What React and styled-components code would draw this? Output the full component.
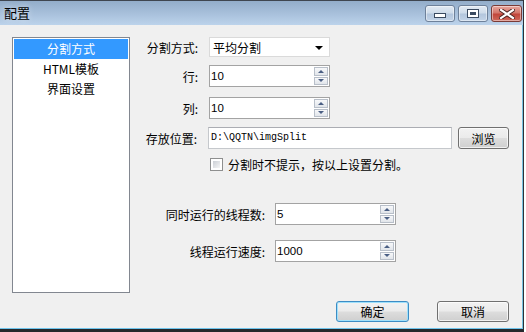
import React from "react";
import styled, { createGlobalStyle } from "styled-components";

const GlobalStyle = createGlobalStyle`
  html, body { margin: 0; padding: 0; background: #ffffff; }
  body { font-family: "Noto Sans CJK SC", "Liberation Sans", sans-serif; font-size: 12px; color: #000; }
  * { box-sizing: border-box; }
`;

const Window = styled.div`
  width: 524px;
  height: 332px;
  display: flex;
  flex-direction: column;
  border-right: 1px solid #2e3136;
  border-bottom: 3px solid #25282c;
  background: #f0f0f0;
`;

const TitleBar = styled.div`
  height: 25px;
  flex: none;
  display: flex;
  align-items: flex-start;
  border-top: 1px solid #3f4650;
  background: linear-gradient(#93adca, #a9c1dc 55%, #bcd3eb);
  padding-left: 4px;
`;

const Title = styled.div`
  font-size: 13px;
  line-height: 13px;
  margin-top: 5px;
  color: #000;
  text-shadow: 0 0 6px rgba(255, 255, 255, 0.6);
  flex: 1;
`;

const Controls = styled.div`
  display: flex;
  gap: 3px;
  margin-top: 4px;
  margin-right: 1px;
`;

const CtlBtn = styled.div`
  width: ${(p) => p.$w}px;
  height: 17px;
  border: 1px solid ${(p) => (p.$close ? "#7a3b36" : "#6e819a")};
  border-radius: 3px;
  background: ${(p) =>
    p.$close
      ? "linear-gradient(#e8a79e, #d4776c 45%, #c2463b 55%, #cf6a5c)"
      : "linear-gradient(#e2eaf3, #cfdcea 45%, #b3c6dd 55%, #c3d4e8)"};
  box-shadow: inset 0 0 0 1px rgba(255, 255, 255, 0.45);
  display: flex;
  align-items: ${(p) => p.$align || "center"};
  justify-content: center;
  padding-bottom: ${(p) => (p.$align === "flex-end" ? 3 : 0)}px;
`;

const Client = styled.div`
  flex: 1;
  display: flex;
  flex-direction: column;
  padding: 12px 13px 0 12px;
  border-right: 1px solid #78c0e0;
  border-bottom: 1px solid #6ec4ec;
`;

const Main = styled.div`
  display: flex;
  height: 256px;
  gap: 15px;
`;

const ListBox = styled.div`
  width: 120px;
  height: 256px;
  border: 1px solid #828790;
  background: #fff;
  padding: 1px;
  display: flex;
  flex-direction: column;
`;

const ListItem = styled.div`
  height: 20px;
  line-height: 20px;
  text-align: center;
  background: ${(p) => (p.$selected ? "#3399ff" : "transparent")};
  color: ${(p) => (p.$selected ? "#fff" : "#000")};
`;

const Form = styled.div`
  display: flex;
  flex-direction: column;
`;

const Row = styled.div`
  display: flex;
  align-items: center;
  height: ${(p) => p.$h || 22}px;
  margin-top: ${(p) => p.$mt || 0}px;
  margin-left: ${(p) => p.$ml || 0}px;
`;

const Label = styled.div`
  width: ${(p) => p.$w}px;
  text-align: right;
  margin-right: ${(p) => p.$gap || 11}px;
  white-space: nowrap;
`;

const Combo = styled.div`
  width: 121px;
  height: 20px;
  border: 1px solid #dadada;
  background: #fff;
  display: flex;
  align-items: center;
  padding: 0 6px 0 3px;
  justify-content: space-between;
`;

const Caret = styled.div`
  width: 0;
  height: 0;
  border-left: 4px solid transparent;
  border-right: 4px solid transparent;
  border-top: 4px solid #000;
  margin-top: 2px;
`;

const Spin = styled.div`
  width: 121px;
  height: 22px;
  border: 1px solid #a3a3a3;
  background: #fff;
  display: flex;
  align-items: stretch;
  padding: 1px 1px 1px 0;
`;

const SpinText = styled.div`
  flex: 1;
  font-family: "Liberation Sans", "DejaVu Sans", sans-serif;
  font-size: 11.5px;
  line-height: 18px;
  padding-left: 1px;
`;

const SpinBtns = styled.div`
  width: 14px;
  display: flex;
  flex-direction: column;
  gap: 1px;
`;

const SpinBtn = styled.div`
  flex: 1;
  border: 1px solid #b8bfc9;
  background: linear-gradient(#f7f8fa, #e1e5ea);
  display: flex;
  align-items: center;
  justify-content: center;
`;

const Tri = styled.div`
  width: 0;
  height: 0;
  border-left: 3px solid transparent;
  border-right: 3px solid transparent;
  ${(p) => (p.$down ? "border-top: 3px solid #4a5f84;" : "border-bottom: 3px solid #4a5f84;")}
`;

const TextBox = styled.div`
  width: 244px;
  height: 22px;
  border: 1px solid #c5c8cc;
  border-top-color: #abadb3;
  background: #fff;
  font-family: "Liberation Mono", monospace;
  font-size: 10px;
  line-height: 20px;
  padding-left: 2px;
  margin-right: 6px;
`;

const Button = styled.div`
  width: ${(p) => p.$w}px;
  height: ${(p) => p.$h || 21}px;
  border: 1px solid ${(p) => (p.$default ? "#3c8cc4" : "#707070")};
  border-radius: 3px;
  background: linear-gradient(#f2f2f2, #ebebeb 48%, #dddddd 52%, #cfcfcf);
  box-shadow: inset 0 0 0 1px ${(p) => (p.$default ? "#9fe0fb" : "rgba(255,255,255,0.7)")};
  display: flex;
  align-items: center;
  justify-content: center;
`;

const CheckRow = styled.label`
  display: flex;
  align-items: center;
  gap: 5px;
`;

const CheckBox = styled.div`
  width: 13px;
  height: 13px;
  border: 1px solid #8e8f8f;
  background: #fff;
  padding: 2px;
  &::after {
    content: "";
    display: block;
    width: 100%;
    height: 100%;
    background: linear-gradient(135deg, #cbcfd5, #f6f6f6);
  }
`;

const Footer = styled.div`
  display: flex;
  justify-content: flex-end;
  gap: 28px;
  margin-top: 8px;
`;

function SpinBox({ value }) {
  return (
    <Spin>
      <SpinText>{value}</SpinText>
      <SpinBtns>
        <SpinBtn><Tri /></SpinBtn>
        <SpinBtn><Tri $down /></SpinBtn>
      </SpinBtns>
    </Spin>
  );
}

export default function App() {
  return (
    <>
      <GlobalStyle />
      <Window>
        <TitleBar>
          <Title>配置</Title>
          <Controls>
            <CtlBtn $w={30} $align="flex-end">
              <svg width="12" height="5" viewBox="0 0 12 5">
                <rect x="0.5" y="0.5" width="11" height="4" fill="#fff" stroke="#3a4a60" />
              </svg>
            </CtlBtn>
            <CtlBtn $w={30}>
              <svg width="12" height="9" viewBox="0 0 12 9">
                <rect x="0.5" y="0.5" width="11" height="8" fill="#fff" stroke="#3a4a60" />
                <rect x="3" y="3" width="6" height="3" fill="#3a4a60" />
              </svg>
            </CtlBtn>
            <CtlBtn $w={31} $close>
              <svg width="16" height="10" viewBox="0 0 16 10">
                <path d="M2 1 L14 9 M14 1 L2 9" stroke="#4a2220" strokeWidth="4" strokeLinecap="square" />
                <path d="M2 1 L14 9 M14 1 L2 9" stroke="#fff" strokeWidth="2.2" strokeLinecap="square" />
              </svg>
            </CtlBtn>
          </Controls>
        </TitleBar>
        <Client>
          <Main>
            <ListBox>
              <ListItem $selected>分割方式</ListItem>
              <ListItem>HTML模板</ListItem>
              <ListItem>界面设置</ListItem>
            </ListBox>
            <Form>
              <Row $h={20}>
                <Label $w={53}>分割方式:</Label>
                <Combo>
                  <span>平均分割</span>
                  <Caret />
                </Combo>
              </Row>
              <Row $mt={8}>
                <Label $w={53}>行:</Label>
                <SpinBox value="10" />
              </Row>
              <Row $mt={10}>
                <Label $w={53}>列:</Label>
                <SpinBox value="10" />
              </Row>
              <Row $mt={8}>
                <Label $w={52} $gap={11}>存放位置:</Label>
                <TextBox>D:\QQTN\imgSplit</TextBox>
                <Button $w={51} $h={22}>浏览</Button>
              </Row>
              <Row $h={14} $mt={8} $ml={65}>
                <CheckRow>
                  <CheckBox />
                  <span>分割时不提示，按以上设置分割。</span>
                </CheckRow>
              </Row>
              <Row $mt={32}>
                <Label $w={120} $gap={10}>同时运行的线程数:</Label>
                <SpinBox value="5" />
              </Row>
              <Row $mt={15}>
                <Label $w={120} $gap={10}>线程运行速度:</Label>
                <SpinBox value="1000" />
              </Row>
            </Form>
          </Main>
          <Footer>
            <Button $w={73} $default>确定</Button>
            <Button $w={72}>取消</Button>
          </Footer>
        </Client>
      </Window>
    </>
  );
}
